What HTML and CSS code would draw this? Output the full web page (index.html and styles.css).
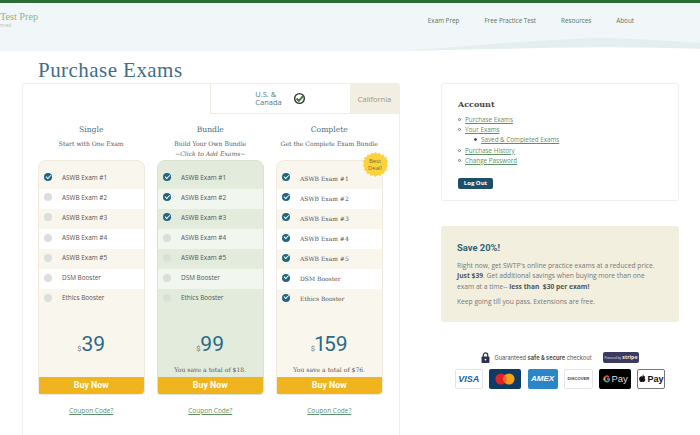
FILE: index.html
```html
<!DOCTYPE html>
<html>
    <head>
        <meta charset="utf-8">
        <title>Purchase Exams</title>
        <link rel="stylesheet" href="styles.css">
    </head>
    <body>
        <header class="site-header">
            <div class="logo">
                <div class="logo-name">Test Prep</div>
                <div class="logo-sub">nced</div>
            </div>
            <nav class="nav">
                <a>Exam Prep</a>
                <a>Free Practice Test</a>
                <a>Resources</a>
                <a>About</a>
            </nav>
            <svg class="wave" viewBox="0 0 300 14" preserveAspectRatio="none">
                <path d="M0 14 C60 10 130 3 200 0.7 C235 1.5 270 4 300 5.7 L300 14 Z" fill="#e4edef"/>
                <path d="M0 14 C70 12.5 130 11 200 10.3 C240 10.5 270 11 300 11.7 L300 14 Z" fill="#fff"/>
            </svg>
        </header>

        <div class="page">
            <main class="main-col">
                <h1 class="page-title">Purchase Exams</h1>
                <section class="exam-card">
                    <div class="tabs">
                        <div class="tab tab-active">
                            <span class="tab-name">U.S. &amp;<br>Canada</span>
                            <svg class="tab-check" viewBox="0 0 14 14">
                                <circle cx="7" cy="7" r="5.2" fill="#fff" stroke="#333" stroke-width="1.5"/>
                                <path d="M3.8 7 L6.3 9.6 L11.6 3.6" fill="none" stroke="#2c7a2e" stroke-width="2"/>
                            </svg>
                        </div>
                        <div class="tab tab-other">California</div>
                    </div>

                    <div class="plans">
                        <div class="plan">
                            <h2 class="plan-name">Single</h2>
                            <p class="plan-sub">Start with One Exam</p>
                            <p class="plan-hint"></p>
                            <div class="plan-box">
                                <ul class="exams">
                                    <li><span class="tick on"></span>ASWB Exam #1</li>
                                    <li><span class="tick"></span>ASWB Exam #2</li>
                                    <li><span class="tick"></span>ASWB Exam #3</li>
                                    <li><span class="tick"></span>ASWB Exam #4</li>
                                    <li><span class="tick"></span>ASWB Exam #5</li>
                                    <li><span class="tick"></span>DSM Booster</li>
                                    <li><span class="tick"></span>Ethics Booster</li>
                                </ul>
                                <div class="price"><span class="dollar">$</span>39</div>
                                <p class="saving"></p>
                                <a class="buy">Buy Now</a>
                            </div>
                            <a class="coupon">Coupon Code?</a>
                        </div>

                        <div class="plan plan-green">
                            <h2 class="plan-name">Bundle</h2>
                            <p class="plan-sub">Build Your Own Bundle</p>
                            <p class="plan-hint">~Click to Add Exams~</p>
                            <div class="plan-box">
                                <ul class="exams">
                                    <li><span class="tick on"></span>ASWB Exam #1</li>
                                    <li><span class="tick on"></span>ASWB Exam #2</li>
                                    <li><span class="tick on"></span>ASWB Exam #3</li>
                                    <li><span class="tick"></span>ASWB Exam #4</li>
                                    <li><span class="tick"></span>ASWB Exam #5</li>
                                    <li><span class="tick"></span>DSM Booster</li>
                                    <li><span class="tick"></span>Ethics Booster</li>
                                </ul>
                                <div class="price"><span class="dollar">$</span>99</div>
                                <p class="saving">You save a total of $18.</p>
                                <a class="buy">Buy Now</a>
                            </div>
                            <a class="coupon">Coupon Code?</a>
                        </div>

                        <div class="plan plan-complete">
                            <h2 class="plan-name">Complete</h2>
                            <p class="plan-sub">Get the Complete Exam Bundle</p>
                            <p class="plan-hint"></p>
                            <div class="plan-box">
                                <div class="best-deal">
                                    <svg viewBox="0 0 24 24">
                                        <polygon fill="#fdd23f" points="12,0 13.9,1.7 16,0.6 17.3,2.8 19.8,2.2 20.3,4.7 22.8,4.9 22.6,7.4 24,8.7 23,11 24,13 22.6,15.2 23,17.6 20.7,18.4 20.3,20.9 17.8,20.9 16.6,23.1 14.2,22.1 12,24 9.8,22.1 7.4,23.1 6.2,20.9 3.7,20.9 3.3,18.4 1,17.6 1.4,15.2 0,13 1,11 0,8.7 1.4,7.4 1.2,4.9 3.7,4.7 4.2,2.2 6.7,2.8 8,0.6 10.1,1.7"/>
                                    </svg>
                                    <span>Best<br>Deal!</span>
                                </div>
                                <ul class="exams">
                                    <li><span class="tick on"></span>ASWB Exam #1</li>
                                    <li><span class="tick on"></span>ASWB Exam #2</li>
                                    <li><span class="tick on"></span>ASWB Exam #3</li>
                                    <li><span class="tick on"></span>ASWB Exam #4</li>
                                    <li><span class="tick on"></span>ASWB Exam #5</li>
                                    <li><span class="tick on"></span>DSM Booster</li>
                                    <li><span class="tick on"></span>Ethics Booster</li>
                                </ul>
                                <div class="price"><span class="dollar">$</span>159</div>
                                <p class="saving">You save a total of $76.</p>
                                <a class="buy">Buy Now</a>
                            </div>
                            <a class="coupon">Coupon Code?</a>
                        </div>
                    </div>
                </section>
            </main>

            <aside class="side-col">
                <section class="account">
                    <h3>Account</h3>
                    <ul class="account-links">
                        <li><a>Purchase Exams</a></li>
                        <li><a>Your Exams</a>
                            <ul>
                                <li><a>Saved &amp; Completed Exams</a></li>
                            </ul>
                        </li>
                        <li><a>Purchase History</a></li>
                        <li><a>Change Password</a></li>
                    </ul>
                    <a class="logout">Log Out</a>
                </section>

                <section class="promo">
                    <h3>Save 20%!</h3>
                    <p>Right now, get SWTP's online practice exams at a reduced price. <b>Just $39</b>. Get additional savings when buying more than one exam at a time-- <b>less than &nbsp;$30 per exam!</b></p>
                    <p>Keep going till you pass. Extensions are free.</p>
                </section>

                <section class="secure">
                    <div class="secure-line">
                        <svg class="lock" viewBox="0 0 10 12">
                            <path d="M2.5 5.5 V3.4 a2.5 2.5 0 0 1 5 0 V5.5" fill="none" stroke="#2e3050" stroke-width="1.3"/>
                            <rect x="0.6" y="5" width="8.8" height="7" rx="0.8" fill="#2e3050"/>
                            <circle cx="5" cy="8.3" r="1" fill="#fff"/>
                        </svg>
                        <span class="secure-text">Guaranteed <b>safe &amp; secure</b> checkout</span>
                        <span class="stripe"><small>Powered by</small> <b>stripe</b></span>
                    </div>
                    <div class="pay-row">
                        <span class="pay pay-visa">VISA</span>
                        <span class="pay pay-mc">
                            <svg viewBox="0 0 24 14" width="24" height="14">
                                <circle cx="8" cy="7" r="5.6" fill="#e4202a"/>
                                <circle cx="16" cy="7" r="5.6" fill="#f79e1b"/>
                                <path d="M12 2.9 a5.6 5.6 0 0 1 0 8.2 a5.6 5.6 0 0 1 0 -8.2 Z" fill="#ff6a1a"/>
                            </svg>
                        </span>
                        <span class="pay pay-amex">AMEX</span>
                        <span class="pay pay-disc">DISCOVER</span>
                        <span class="pay pay-gpay">
                            <svg viewBox="0 0 10 10" width="8" height="8">
                                <path d="M9 4.2 H5 V6 H7.2 A2.4 2.4 0 1 1 6.6 3.3 L7.9 2 A4.2 4.2 0 1 0 9.1 5 Z" fill="#4a90e2"/>
                                <path d="M1.3 2.8 L3 4 A2.4 2.4 0 0 1 6.6 3.3 L7.9 2 A4.2 4.2 0 0 0 1.3 2.8 Z" fill="#e0483a"/>
                                <path d="M1.3 2.8 A4.2 4.2 0 0 0 1.3 7.2 L3 5.9 A2.4 2.4 0 0 1 3 4 Z" fill="#f2b90f"/>
                                <path d="M1.3 7.2 A4.2 4.2 0 0 0 7.8 8 L6.2 6.8 A2.4 2.4 0 0 1 3 5.9 Z" fill="#3aa757"/>
                            </svg>
                            Pay
                        </span>
                        <span class="pay pay-apple">
                            <svg viewBox="0 0 10 12" width="7" height="9">
                                <path d="M5 3 C6 2.4 8 2.3 9 3.8 C7.6 4.7 7.8 6.9 9.4 7.6 C8.8 9.2 7.8 11 6.7 11 C5.9 11 5.7 10.5 4.8 10.5 C3.9 10.5 3.6 11 2.9 11 C1.6 11 0.2 8.2 0.2 6.2 C0.2 3.6 3 2 5 3 Z M5 2.6 C4.9 1.5 5.8 0.4 7 0.3 C7.1 1.5 6.2 2.6 5 2.6 Z" fill="#111"/>
                            </svg>
                            Pay
                        </span>
                    </div>
                </section>
            </aside>
        </div>
    </body>
</html>
```

FILE: styles.css
```css
html, body {
    height: 435px;
    overflow: hidden;
}
body {
    margin: 0;
    background: #fff;
    font-family: "Open Sans", sans-serif;
    color: #666;
}
h1, h2, h3, p, ul {
    margin: 0;
    padding: 0;
}
ul {
    list-style: none;
}

/* header */
.site-header {
    position: relative;
    height: 48px;
    background: #f1f6f9;
    border-top: 3px solid #2f6b35;
    display: flex;
    justify-content: space-between;
}
.logo {
    padding-top: 8px;
}
.logo-name {
    font-family: "Liberation Serif", serif;
    font-size: 10.2px;
    line-height: 12px;
    color: #8db685;
}
.logo-sub {
    font-size: 5px;
    line-height: 5px;
    color: #b5bcb5;
}
.nav {
    display: flex;
    gap: 25px;
    padding: 13px 66px 0 0;
    font-size: 6.3px;
    line-height: 9px;
    color: #5d7263;
}
.wave {
    position: absolute;
    right: 0;
    bottom: 0;
    width: 300px;
    height: 14px;
}

/* layout */
.page {
    display: flex;
    padding-left: 22px;
    gap: 41px;
}
.main-col {
    width: 378px;
}
.side-col {
    width: 238px;
    padding-top: 32px;
}

/* exam table */
.page-title {
    font-family: "Liberation Serif", serif;
    font-weight: normal;
    font-size: 21px;
    letter-spacing: 0.45px;
    line-height: 24px;
    margin: 7px 0 1px 16px;
    color: #3f6f85;
}
.exam-card {
    box-sizing: border-box;
    height: 352px;
    border: 1px solid #eeeeee;
    border-bottom: none;
    border-radius: 3px 3px 0 0;
}
.tabs {
    display: flex;
    justify-content: flex-end;
    height: 30px;
}
.tab {
    display: flex;
    align-items: center;
    justify-content: center;
}
.tab-active {
    width: 139px;
    gap: 11px;
    border-left: 1px solid #efebdf;
    border-bottom: 1px solid #efebdf;
    color: #4d7a90;
    font-size: 7.5px;
    line-height: 7.5px;
}
.tab-check {
    width: 13px;
    height: 13px;
}
.tab-other {
    width: 49px;
    background: #f2eee4;
    color: #a49570;
    font-size: 7.5px;
}

.plans {
    display: flex;
    gap: 12.5px;
    padding: 10px 16px 0 15px;
}
.plan {
    width: 106.5px;
    text-align: center;
}
.plan-name {
    font-family: "DejaVu Serif", serif;
    font-weight: normal;
    font-size: 7.6px;
    line-height: 12px;
    color: #46707f;
}
.plan-sub {
    font-family: "DejaVu Serif", serif;
    font-size: 6.1px;
    line-height: 10px;
    margin-top: 3px;
    white-space: nowrap;
    color: #5c5c5c;
}
.plan-hint {
    font-family: "DejaVu Serif", serif;
    font-style: italic;
    font-size: 6.1px;
    line-height: 7px;
    height: 7px;
    margin: 1px 0 3px;
    color: #5c5c5c;
}
.plan-box {
    box-sizing: border-box;
    position: relative;
    height: 235px;
    display: flex;
    flex-direction: column;
    padding-top: 7.7px;
    background: #f9f6ee;
    border: 1px solid #efeadd;
    border-radius: 8px 8px 4px 4px;
}
.exams {
    height: 141px;
}
.exams li {
    box-sizing: border-box;
    display: flex;
    align-items: center;
    height: 20.1px;
    padding: 0 0 3px 5px;
    gap: 10px;
    font-size: 6.4px;
    text-align: left;
    color: #555;
}
.exams li:nth-child(even) {
    background: #fff;
}
.tick {
    position: relative;
    width: 8px;
    height: 8px;
    border-radius: 50%;
    background: #dddddd;
    flex: none;
}
.tick.on {
    background: #1f6480;
}
.tick.on::after {
    content: "";
    position: absolute;
    left: 2px;
    top: 1.5px;
    width: 3.5px;
    height: 2px;
    border-left: 1.3px solid #fff;
    border-bottom: 1.3px solid #fff;
    transform: rotate(-45deg);
}
.price {
    margin-top: 21px;
    font-family: Roboto, sans-serif;
    font-variant-numeric: proportional-nums;
    font-size: 21px;
    line-height: 26px;
    color: #296a86;
}
.dollar {
    font-size: 7.5px;
    color: #777;
}
.saving {
    font-family: "DejaVu Serif", serif;
    font-size: 6.1px;
    line-height: 10px;
    margin-top: 3px;
    height: 10px;
    white-space: nowrap;
    color: #5c5c5c;
}
.buy {
    margin-top: auto;
    height: 17px;
    background: #f0b41f;
    border-radius: 0 0 4px 0;
    color: #fff;
    font-family: Roboto, sans-serif;
    font-weight: 700;
    font-size: 8.8px;
    line-height: 17px;
}
.coupon {
    display: block;
    margin-top: 11px;
    font-size: 6.5px;
    line-height: 9px;
    text-decoration: underline;
    color: #5f9168;
}

/* bundle and complete plans */
.plan-green .plan-box {
    background: #e2ebdc;
    border-color: #d7e3d0;
}
.plan-green .exams li:nth-child(even) {
    background: #f1f6ef;
}
.plan-green .tick:not(.on) {
    background: #dadfd8;
}
.plan-complete .exams li {
    font-family: "DejaVu Serif", serif;
    font-size: 6px;
    padding-bottom: 1px;
}
.plan-complete .tick {
    margin-top: -2px;
}
.best-deal {
    position: absolute;
    top: -9px;
    right: -6px;
    width: 25px;
    height: 25px;
}
.best-deal svg {
    width: 25px;
    height: 25px;
}
.best-deal span {
    position: absolute;
    top: 6px;
    left: 0;
    right: 0;
    font-size: 6px;
    line-height: 6.5px;
    color: #7d6b2a;
}

/* sidebar */
.account {
    height: 118px;
    box-sizing: border-box;
    padding: 14px 16px;
    border: 1px solid #eeeeee;
    border-radius: 3px;
}
.account h3 {
    font-family: "DejaVu Serif", serif;
    font-size: 8px;
    line-height: 12px;
    margin-bottom: 5px;
    color: #444;
}
.account-links {
    font-size: 6.3px;
    line-height: 10.2px;
    padding-left: 7px;
}
.account-links li::before {
    content: "";
    display: inline-block;
    box-sizing: border-box;
    width: 3px;
    height: 3px;
    margin: 0 4px 1px -7px;
    border: 0.8px solid #777;
    border-radius: 50%;
}
.account-links ul {
    padding-left: 16px;
}
.account-links ul li::before {
    background: #444;
    border-color: #444;
}
.account-links a {
    text-decoration: underline;
    color: #5f9168;
}
.logout {
    display: block;
    width: 35px;
    margin-top: 12px;
    background: #1d5068;
    border-radius: 2px;
    color: #fff;
    font-weight: 700;
    font-size: 6px;
    line-height: 10.5px;
    text-align: center;
}
.promo {
    height: 96px;
    box-sizing: border-box;
    margin-top: 25px;
    padding: 15px 16px;
    background: #f2efdf;
    border-radius: 3px;
    font-size: 6.7px;
    line-height: 10.4px;
    color: #777;
}
.promo h3 {
    font-family: Roboto, sans-serif;
    font-size: 9.4px;
    line-height: 12px;
    margin: 1px 0 7px;
    color: #2d6277;
}
.promo p {
    margin-bottom: 5px;
}
.promo b {
    color: #555;
}
.secure {
    margin-top: 29px;
}
.secure-line {
    display: flex;
    align-items: center;
    justify-content: center;
    gap: 5px;
    height: 12px;
}
.lock {
    width: 9px;
    height: 11px;
}
.secure-text {
    font-family: Inter, sans-serif;
    font-size: 5.7px;
    color: #555;
    margin-right: 6px;
}
.stripe {
    height: 11px;
    padding: 0 2px;
    background: #3b3b60;
    border-radius: 2px;
    color: #e8e8f0;
    font-size: 5.2px;
    line-height: 11px;
}
.stripe small {
    font-size: 3px;
}
.pay-row {
    display: flex;
    justify-content: center;
    gap: 6.3px;
    margin-top: 6px;
}
.pay {
    box-sizing: border-box;
    height: 19.5px;
    display: flex;
    align-items: center;
    justify-content: center;
    gap: 1px;
    border-radius: 2px;
    font-family: "Liberation Sans", sans-serif;
    font-weight: 700;
}
.pay-visa {
    width: 28.5px;
    border: 1px solid #e3e5ea;
    color: #1d5f9c;
    font-size: 9px;
    font-style: italic;
}
.pay-mc {
    width: 32px;
    background: #0e3a66;
}
.pay-amex {
    width: 30px;
    background: #2a86c8;
    color: #fff;
    font-size: 8px;
    font-style: italic;
}
.pay-disc {
    width: 29px;
    border: 1px solid #e3e5ea;
    color: #444;
    font-size: 4.2px;
}
.pay-gpay {
    width: 32px;
    background: #000;
    color: #ddd;
    font-weight: 400;
    font-size: 9.5px;
}
.pay-apple {
    width: 28px;
    border: 1.5px solid #777;
    color: #111;
    font-size: 9px;
}
```
